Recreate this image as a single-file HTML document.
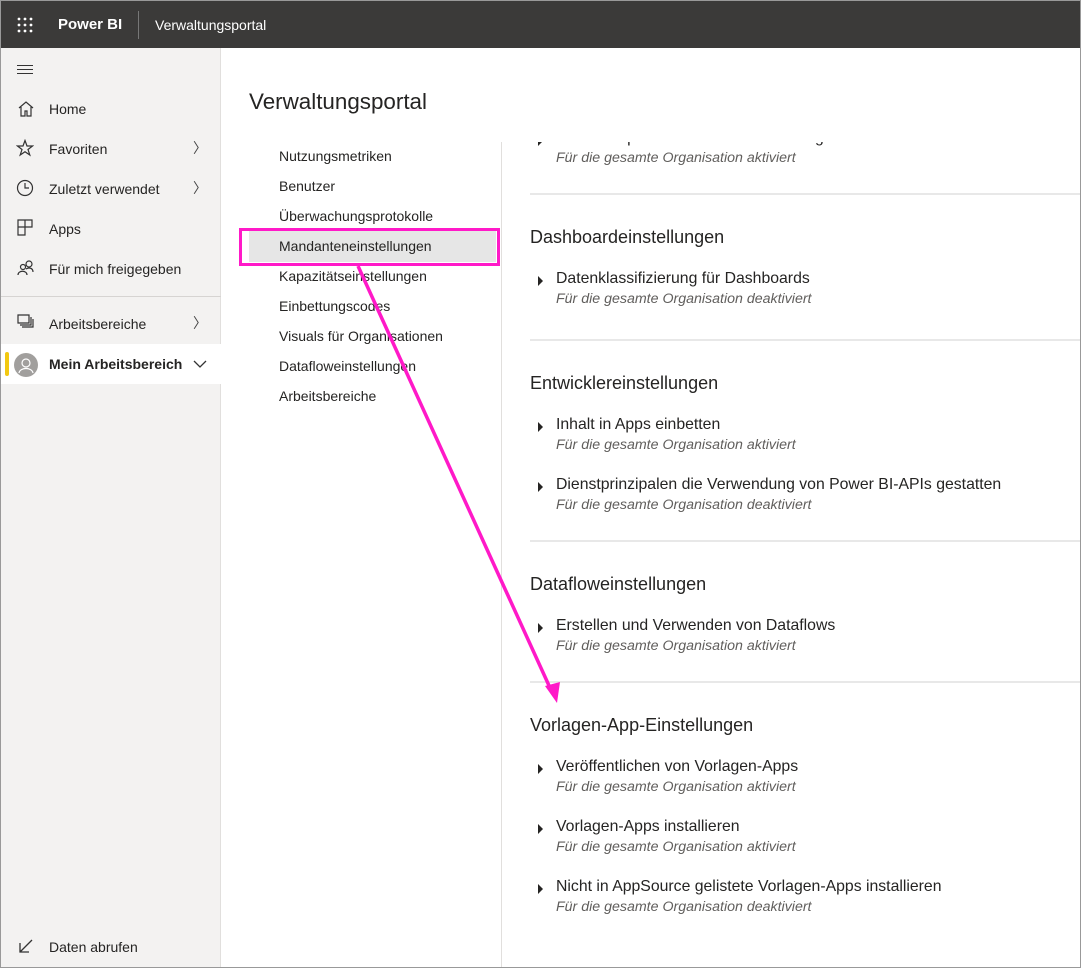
<!DOCTYPE html>
<html><head><meta charset="utf-8"><style>
*{margin:0;padding:0;box-sizing:border-box}
body{width:1081px;height:968px;position:relative;overflow:hidden;background:#fff;font-family:"Segoe UI","Liberation Sans",sans-serif;color:#252423}
.abs{position:absolute;white-space:nowrap}
#top{position:absolute;left:0;top:0;width:1081px;height:48px;background:#3b3a39;border:1px solid #777;border-bottom:none}
#side{position:absolute;left:1px;top:48px;width:220px;height:919px;background:#f3f2f1;border-right:1px solid #e1dfdd}
.nav{position:absolute;left:48px;font-size:14px;color:#252423}
.chev{position:absolute;left:192px;font-size:14px;color:#444}
.sub{font-size:14px;color:#252423;position:absolute;left:279px}
.h{position:absolute;left:530px;font-size:18px;color:#252423}
.t{position:absolute;left:556px;font-size:15.8px;color:#252423}
.s{position:absolute;left:556px;font-size:14.2px;font-style:italic;color:#605e5c}
.tri{position:absolute;left:538px;width:0;height:0;border-left:5px solid #252423;border-top:5px solid transparent;border-bottom:5px solid transparent}
.hr{position:absolute;left:530px;width:551px;height:2px;background:#e8e8e8}
</style></head><body>
<div style="position:absolute;left:0;top:0;width:1081px;height:968px;border:1px solid #999;z-index:9;pointer-events:none"></div>
<div id="top">
<svg class="abs" style="left:16px;top:16px" width="17" height="17"><g fill="#fff"><circle cx="2" cy="2" r="1.4"/><circle cx="8" cy="2" r="1.4"/><circle cx="14" cy="2" r="1.4"/><circle cx="2" cy="8" r="1.4"/><circle cx="8" cy="8" r="1.4"/><circle cx="14" cy="8" r="1.4"/><circle cx="2" cy="14" r="1.4"/><circle cx="8" cy="14" r="1.4"/><circle cx="14" cy="14" r="1.4"/></g></svg>
<div class="abs" style="left:57px;top:15px;color:#fff;font-size:15px;font-weight:bold">Power BI</div>
<div class="abs" style="left:137px;top:10px;width:1px;height:28px;background:#777"></div>
<div class="abs" style="left:154px;top:16px;color:#fff;font-size:14px">Verwaltungsportal</div>
</div>
<div id="side">
<div class="abs" style="left:16px;top:17px;width:16px;height:1px;background:#333;box-shadow:0 4px 0 #333,0 8px 0 #333"></div>
<svg class="abs" style="left:16px;top:52px" width="18" height="18" fill="none" stroke="#333" stroke-width="1.2"><path d="M2 8 L9 2 L16 8 M4 7 V16 H8 V11 H10 V16 H14 V7"/></svg>
<div class="nav" style="top:53px">Home</div>
<svg class="abs" style="left:15px;top:91px" width="18" height="18" fill="none" stroke="#333" stroke-width="1.2"><path d="M9 1.5 L11 7 L16.5 7 L12 10.5 L13.8 16 L9 12.7 L4.2 16 L6 10.5 L1.5 7 L7 7 Z"/></svg>
<div class="nav" style="top:93px">Favoriten</div><div class="chev" style="top:90px">〉</div>
<svg class="abs" style="left:15px;top:131px" width="18" height="18" fill="none" stroke="#333" stroke-width="1.2"><circle cx="9" cy="9" r="7.5"/><path d="M9 4 V9 H13"/></svg>
<div class="nav" style="top:133px">Zuletzt verwendet</div><div class="chev" style="top:130px">〉</div>
<svg class="abs" style="left:16px;top:171px" width="18" height="18" fill="none" stroke="#333" stroke-width="1.2"><path d="M1 1 H8 V16 H1 Z M1 8 H15 V1 H8"/></svg>
<div class="nav" style="top:173px">Apps</div>
<svg class="abs" style="left:16px;top:211px" width="18" height="18" fill="none" stroke="#333" stroke-width="1.2"><circle cx="12" cy="5" r="3"/><circle cx="6" cy="8" r="2.5"/><path d="M1 16 C1 11 10 11 10 16 M9 10 C12 8 16 9 16 13"/></svg>
<div class="nav" style="top:213px">Für mich freigegeben</div>
<div class="abs" style="left:0;top:248px;width:220px;height:1px;background:#d6d4d2"></div>
<svg class="abs" style="left:16px;top:266px" width="18" height="18" fill="none" stroke="#333" stroke-width="1.2"><path d="M1 1 H12 V9 H1 Z M3 11 H14 V3 M5 13 H16 V5"/></svg>
<div class="nav" style="top:268px">Arbeitsbereiche</div><div class="chev" style="top:265px">〉</div>
<div class="abs" style="left:0;top:296px;width:220px;height:40px;background:#fff"></div>
<div class="abs" style="left:4px;top:304px;width:4px;height:24px;background:#f2c811;border-radius:2px"></div>
<div class="abs" style="left:13px;top:305px;width:24px;height:24px;border-radius:50%;background:#a19f9d"></div>
<svg class="abs" style="left:13px;top:305px" width="24" height="24" fill="none" stroke="#fff" stroke-width="1.2"><circle cx="12" cy="10" r="4"/><path d="M5 20 C6 14 18 14 19 20"/></svg>
<div class="nav" style="top:308px;font-weight:bold">Mein Arbeitsbereich</div>
<svg class="abs" style="left:192px;top:311px" width="14" height="10" fill="none" stroke="#333" stroke-width="1.3"><path d="M1 2 L7 8 L13 2"/></svg>
<svg class="abs" style="left:18px;top:891px" width="14" height="14" fill="none" stroke="#333" stroke-width="1.3"><path d="M13 1 L1 13 M1 4 V13 H10"/></svg>
<div class="nav" style="top:891px">Daten abrufen</div>
</div>
<div class="abs" style="left:249px;top:89px;font-size:22.4px;color:#252423;font-weight:300">Verwaltungsportal</div>
<div class="sub" style="top:148px">Nutzungsmetriken</div>
<div class="sub" style="top:178px">Benutzer</div>
<div class="sub" style="top:208px">Überwachungsprotokolle</div>
<div class="abs" style="left:249px;top:231px;width:247px;height:31px;background:#e6e6e6"></div>
<div class="sub" style="top:238px">Mandanteneinstellungen</div>
<div class="sub" style="top:268px">Kapazitätseinstellungen</div>
<div class="sub" style="top:298px">Einbettungscodes</div>
<div class="sub" style="top:328px">Visuals für Organisationen</div>
<div class="sub" style="top:358px">Dataflowеinstellungen</div>
<div class="sub" style="top:388px">Arbeitsbereiche</div>
<div class="abs" style="left:501px;top:142px;width:1px;height:826px;background:#e1dfdd"></div>
<div class="abs" style="left:502px;top:142px;width:578px;height:60px;overflow:hidden">
<div class="tri" style="left:36px;top:-6px"></div>
<div class="t" style="left:54px;top:-13px">Benutzerspezifische Daten in Nutzungsmetriken für Inhaltsersteller</div>
<div class="s" style="left:54px;top:8px">Für die gesamte Organisation aktiviert</div>
</div>
<div class="hr" style="top:193px"></div>
<div class="h" style="top:227px">Dashboardeinstellungen</div>
<div class="tri" style="top:276px"></div><div class="t" style="top:270px">Datenklassifizierung für Dashboards</div><div class="s" style="top:291px">Für die gesamte Organisation deaktiviert</div>
<div class="hr" style="top:339px"></div>
<div class="h" style="top:373px">Entwicklereinstellungen</div>
<div class="tri" style="top:422px"></div><div class="t" style="top:416px">Inhalt in Apps einbetten</div><div class="s" style="top:437px">Für die gesamte Organisation aktiviert</div>
<div class="tri" style="top:482px"></div><div class="t" style="top:476px">Dienstprinzipalen die Verwendung von Power BI-APIs gestatten</div><div class="s" style="top:497px">Für die gesamte Organisation deaktiviert</div>
<div class="hr" style="top:540px"></div>
<div class="h" style="top:574px">Dataflowеinstellungen</div>
<div class="tri" style="top:623px"></div><div class="t" style="top:617px">Erstellen und Verwenden von Dataflows</div><div class="s" style="top:638px">Für die gesamte Organisation aktiviert</div>
<div class="hr" style="top:681px"></div>
<div class="h" style="top:715px">Vorlagen-App-Einstellungen</div>
<div class="tri" style="top:764px"></div><div class="t" style="top:758px">Veröffentlichen von Vorlagen-Apps</div><div class="s" style="top:779px">Für die gesamte Organisation aktiviert</div>
<div class="tri" style="top:824px"></div><div class="t" style="top:818px">Vorlagen-Apps installieren</div><div class="s" style="top:839px">Für die gesamte Organisation aktiviert</div>
<div class="tri" style="top:884px"></div><div class="t" style="top:878px">Nicht in AppSource gelistete Vorlagen-Apps installieren</div><div class="s" style="top:899px">Für die gesamte Organisation deaktiviert</div>
<div class="abs" style="left:239px;top:228px;width:261px;height:38px;border:3px solid #ff19c8"></div>
<svg class="abs" style="left:0;top:0" width="1081" height="968"><line x1="358" y1="266" x2="551" y2="690" stroke="#ff19c8" stroke-width="3.5"/><path d="M545 686 L557 703 L560 682 Z" fill="#ff19c8"/></svg>
</body></html>
